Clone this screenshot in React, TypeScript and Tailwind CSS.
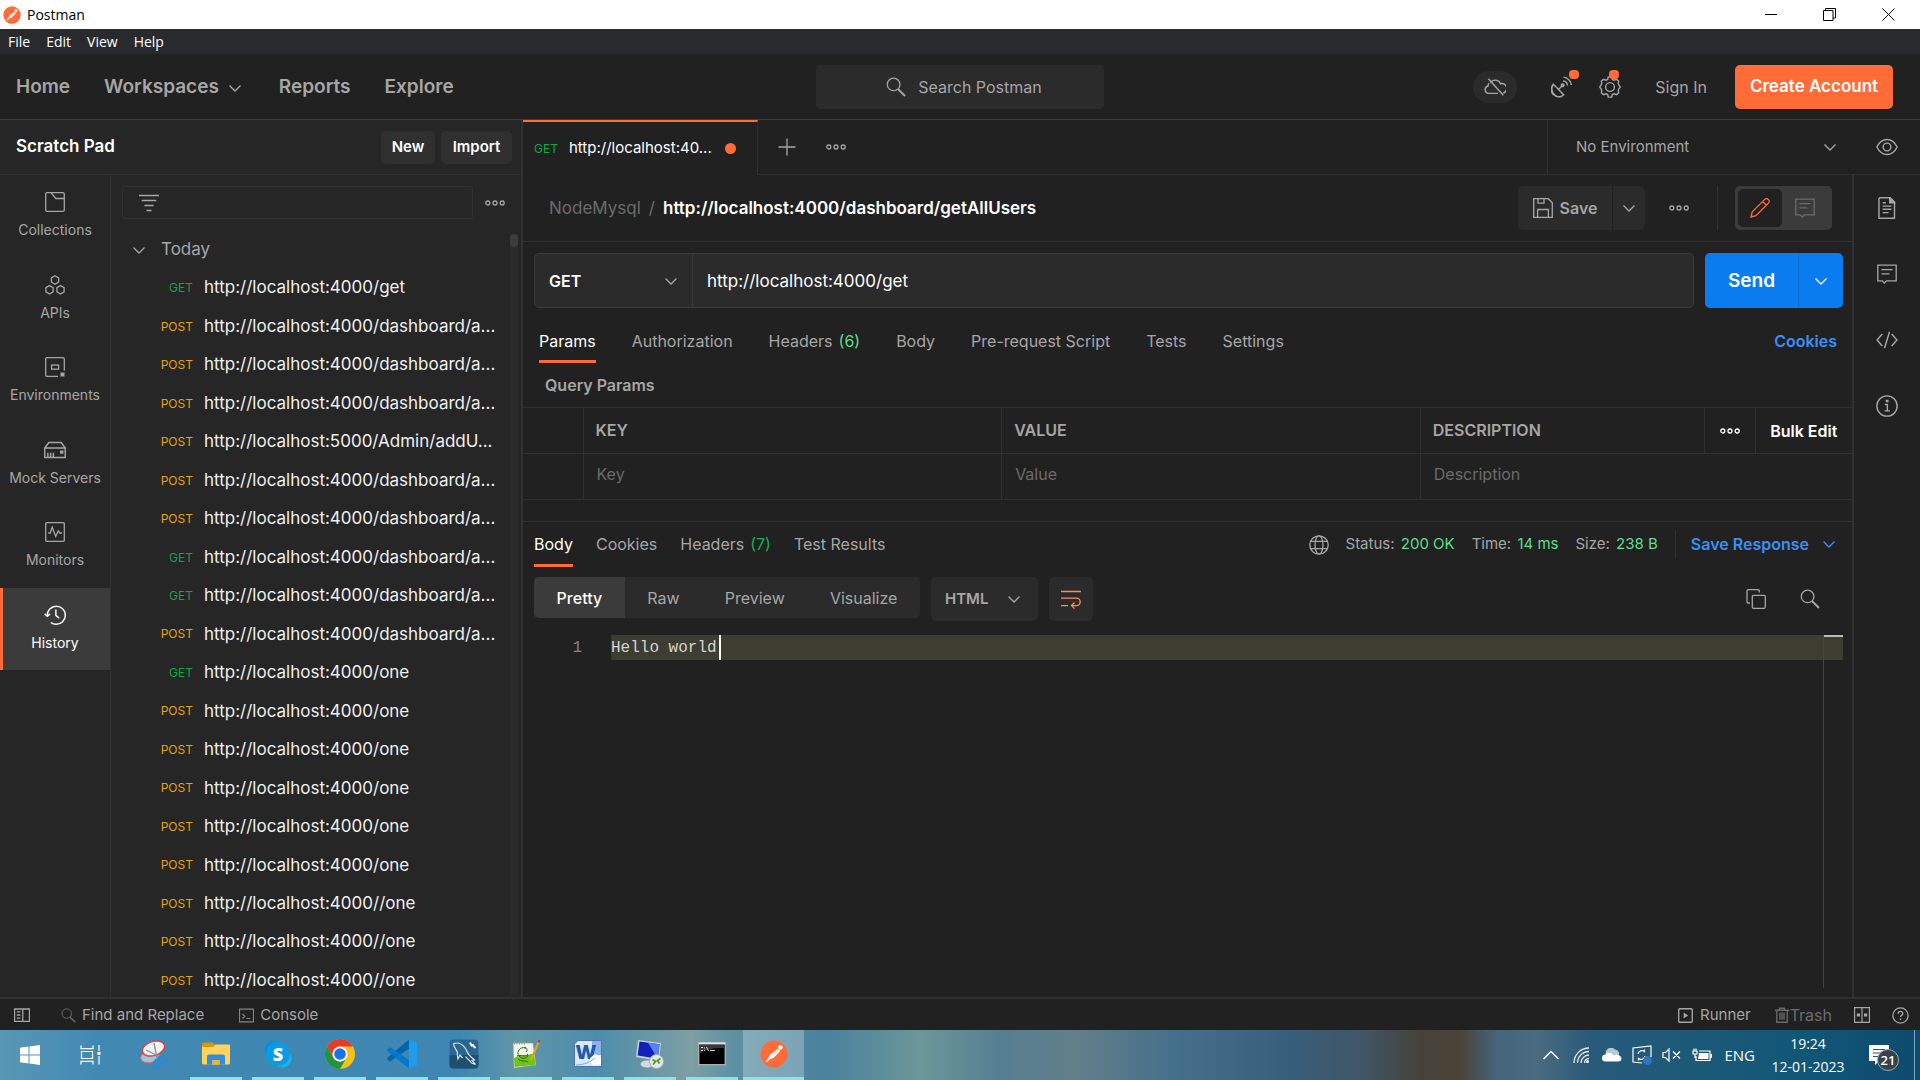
import React, { useState } from 'react';

interface IconProps {
  size?: number;
  className?: string;
  children?: React.ReactNode;
}

/* Every line icon is drawn on a 20 unit grid */
function Icon({ size = 20, className = '', children }: IconProps) {
  return (
    <svg
      width={size}
      height={size}
      viewBox="0 0 20 20"
      fill="none"
      stroke="currentColor"
      strokeWidth={1.3}
      className={`flex-shrink-0 ${className}`}
      aria-hidden="true"
    >
      {children}
    </svg>
  );
}

const Chevron = ({ className = '' }: { className?: string }) => (
  <Icon className={className}>
    <path d="M4.5 7.5l5.5 5.5 5.5-5.5" />
  </Icon>
);

const Dots = ({ className = '' }: { className?: string }) => (
  <Icon className={className}>
    <circle cx="2.8" cy="10" r="2" />
    <circle cx="10" cy="10" r="2" />
    <circle cx="17.2" cy="10" r="2" />
  </Icon>
);

const SearchIcon = ({ size = 20, className = '' }: IconProps) => (
  <Icon size={size} className={className}>
    <circle cx="7.6" cy="7.4" r="6.3" />
    <path d="M12 12l7 7" strokeWidth={1.9} />
  </Icon>
);

const CommentIcon = ({ className = '' }: { className?: string }) => (
  <Icon className={className}>
    <path d="M.8 1.2h18.4v15.6H9.4L7.3 19l-2.1-2.2H.8z" />
    <path d="M4.4 5.7h11.2M4.4 9.9h8" />
  </Icon>
);

const PostmanLogo = ({ size }: { size: number }) => (
  <svg width={size} height={size} viewBox="0 0 28 28" className="flex-shrink-0" aria-hidden="true">
    <circle cx="14" cy="14" r="13.5" fill="#ff6c37" />
    <circle cx="20.3" cy="7.4" r="2.3" fill="#fff" />
    <path d="M17.6 9.3l2.2 1.7-6.2 6.6-3.4.8-3.4 3.6-.6-.6 3.2-4.2 1-2.4z" fill="#fff" stroke="#fff" strokeWidth=".8" />
    <path d="M13 14.2l4.6-3.9M12.8 16.6l5-4.6" stroke="#ff9a75" strokeWidth=".5" />
  </svg>
);

const navItems = [
  {
    label: 'Collections',
    icon: (
      <Icon>
        <rect x=".7" y=".7" width="18.6" height="18.6" rx="1.4" />
        <path d="M6.2.8l4.6 5.7h8.4" />
      </Icon>
    ),
  },
  {
    label: 'APIs',
    icon: (
      <Icon>
        <path d="M10 .8l3.6 2.1v4.2L10 9.2 6.4 7.1V2.9z" />
        <path d="M4.5 10.6l3.6 2.1v4.2L4.5 19 .9 16.9v-4.2z" />
        <path d="M15.5 10.6l3.6 2.1v4.2L15.5 19l-3.6-2.1v-4.2z" />
      </Icon>
    ),
  },
  {
    label: 'Environments',
    icon: (
      <Icon>
        <path d="M13 19.3H2A1.3 1.3 0 01.7 18V2A1.3 1.3 0 012 .7h16A1.3 1.3 0 0119.3 2v11.5" />
        <rect x="6.6" y="8" width="7" height="4.2" />
        <rect x="15.5" y="15.5" width="4" height="4" fill="currentColor" stroke="none" />
      </Icon>
    ),
  },
  {
    label: 'Mock Servers',
    icon: (
      <Icon size={22}>
        <path d="M.7 8.2h18.6v8.6H.7zM.7 8.2l3.7-5h11.2l3.7 5" />
        <path d="M3.5 12.5v4M6 12.5v4M8.5 12.5v4M15.2 11.2H17v1.6h-1.8z" />
      </Icon>
    ),
  },
  {
    label: 'Monitors',
    icon: (
      <Icon>
        <rect x=".7" y=".7" width="18.6" height="18.6" rx="1" />
        <path d="M3.2 11h2l2-5.8 3.5 9.2 2.6-5.6 1.5 2.2H17" />
      </Icon>
    ),
  },
  {
    label: 'History',
    icon: (
      <Icon size={22}>
        <path d="M3 10.5A8.2 8.2 0 1111 18.4c-1.8 0-3.4-.5-4.8-1.6" />
        <path d="M.6 9L3 11.2 5.6 9" />
        <path d="M10.8 5v5.3l3 2.7" />
      </Icon>
    ),
  },
];

const dashboardUrl = 'http://localhost:4000/dashboard/a...';
const oneUrl = 'http://localhost:4000/one';

const historyItems = [
  { method: 'GET', url: 'http://localhost:4000/get' },
  { method: 'POST', url: dashboardUrl },
  { method: 'POST', url: dashboardUrl },
  { method: 'POST', url: dashboardUrl },
  { method: 'POST', url: 'http://localhost:5000/Admin/addU...' },
  { method: 'POST', url: dashboardUrl },
  { method: 'POST', url: dashboardUrl },
  { method: 'GET', url: dashboardUrl },
  { method: 'GET', url: dashboardUrl },
  { method: 'POST', url: dashboardUrl },
  { method: 'GET', url: oneUrl },
  { method: 'POST', url: oneUrl },
  { method: 'POST', url: oneUrl },
  { method: 'POST', url: oneUrl },
  { method: 'POST', url: oneUrl },
  { method: 'POST', url: oneUrl },
  { method: 'POST', url: 'http://localhost:4000//one' },
  { method: 'POST', url: 'http://localhost:4000//one' },
  { method: 'POST', url: 'http://localhost:4000//one' },
];

function TitleBar() {
  return (
    <div className="h-[29px] flex-shrink-0 flex items-center bg-white text-black pl-[3px] pr-0.5 font-['Open_Sans',sans-serif] text-sm">
      <PostmanLogo size={18} />
      <span className="ml-1.5 flex-1">Postman</span>
      <button aria-label="Minimize" className="w-[58px] h-full flex items-center justify-center">
        <svg width="12" height="12" stroke="#000" fill="none"><path d="M0 5.5h12" /></svg>
      </button>
      <button aria-label="Restore" className="w-[58px] h-full flex items-center justify-center">
        <svg width="13" height="13" stroke="#000" fill="none">
          <path d="M.5 2.5H10v10H.5zM2.5 2.5v-2h10V10H10" />
        </svg>
      </button>
      <button aria-label="Close" className="w-[60px] h-full flex items-center justify-center">
        <svg width="13" height="13" stroke="#000" fill="none"><path d="M.5.5l12 12M12.5.5l-12 12" /></svg>
      </button>
    </div>
  );
}

function MenuBar() {
  return (
    <div className="h-[25px] flex-shrink-0 flex items-center gap-4 bg-[#292a2d] pl-2 text-white font-['Open_Sans',sans-serif] text-sm">
      {['File', 'Edit', 'View', 'Help'].map((item) => (
        <button key={item}>{item}</button>
      ))}
    </div>
  );
}

function Header() {
  return (
    <header className="h-[66px] flex-shrink-0 grid grid-cols-[1fr_288px_1fr] items-center border-b border-[#3b3b3b]">
      <nav className="flex items-center gap-[34px] pl-4 pt-0.5 text-[19px] font-semibold text-[#a6a6a6]">
        <a href="#home">Home</a>
        <button className="flex items-center gap-1.5">
          Workspaces
          <Chevron />
        </button>
        <a href="#reports">Reports</a>
        <a href="#explore">Explore</a>
      </nav>
      <button className="h-[44px] pl-2 rounded-[5px] bg-[#2b2b2b] flex items-center justify-center gap-3 text-base text-[#a6a6a6]">
        <SearchIcon />
        Search Postman
      </button>
      <div className="flex items-center justify-end pr-[27px]">
        <button aria-label="Offline" className="w-[44px] h-8 rounded-full bg-[#2b2b2b] text-[#a6a6a6] flex items-center justify-center">
          <Icon size={22}>
            <path d="M6 6.2A5 5 0 0115 7a4 4 0 012.5 8.5M12.6 15.8H4.2a3.4 3.4 0 01-.5-6.7c0-1 .3-1.9.8-2.7" />
            <path d="M4 2.5l13.5 15" />
          </Icon>
        </button>
        <button aria-label="Capture requests" className="relative ml-[34px] text-[#a6a6a6]">
          <Icon size={22}>
            <path d="M2.2 7.5A6.6 6.6 0 0011.5 17zM2.2 7.5c-2 3-1.5 7 1 9.6s5.500 2.500 8.300-.1M6.800 12.200L10 9" />
            <circle cx="10.6" cy="8.4" r="1.2" fill="currentColor" />
            <path d="M11 4.6a4.3 4.3 0 014 4M11.4 1a7.8 7.8 0 017 7.2" />
          </Icon>
          <span className="absolute -top-1.5 -right-1.5 w-2.5 h-[9px] rounded bg-[#ff6c37]" />
        </button>
        <button aria-label="Settings" className="relative ml-[26px] text-[#a6a6a6]">
          <Icon size={22}>
            <path d="M8.400.8h3.200l.5 2.300 1.600.8 2.200-.8 1.900 1.500-.3 2 .6 1.800 1.300 1.600-1.300 1.600-.6 1.800.3 2-1.900 1.500-2.200-.8-1.600.8-.5 2.300H8.400l-.5-2.300-1.600-.8-2.200.8-1.900-1.500.3-2-.6-1.800L.6 10l1.300-1.600.6-1.800-.3-2 1.900-1.500 2.200.8 1.600-.8z" />
            <circle cx="10" cy="10" r="4" />
          </Icon>
          <span className="absolute -top-1.5 right-0.5 w-2.5 h-[9px] rounded bg-[#ff6c37]" />
        </button>
        <a href="#signin" className="ml-[34px] text-base text-[#a6a6a6]">Sign In</a>
        <button className="ml-7 w-[158px] h-[44px] pt-px rounded-[5px] bg-[#ff6c37] text-white text-[17px] font-semibold">
          Create Account
        </button>
      </div>
    </header>
  );
}

function Sidebar() {
  const [active, setActive] = useState('History');

  return (
    <aside className="w-[523px] flex-shrink-0 flex flex-col bg-[#262626] border-r-2 border-[#303030]">
      <div className="h-[55px] flex-shrink-0 flex items-center gap-1.5 border-b border-[#303030] pl-4 pr-[9px]">
        <h1 className="flex-1 text-[17px] font-semibold text-white">Scratch Pad</h1>
        <button className="w-[54px] h-[33px] rounded-[5px] bg-[#303030] text-[15px] font-semibold text-white">New</button>
        <button className="w-[71px] h-[33px] rounded-[5px] bg-[#303030] text-[15px] font-semibold text-white">Import</button>
      </div>

      <div className="flex-1 min-h-0 flex">
        <nav className="w-[111px] flex-shrink-0 border-r border-[#303030]">
          <div className="h-[495px] flex flex-col">
            {navItems.map(({ label, icon }) => (
              <button
                key={label}
                onClick={() => setActive(label)}
                className={`flex-1 flex flex-col items-center gap-[7px] pt-4 text-sm ${
                  active === label
                    ? 'bg-[#3b3b3b] text-white shadow-[inset_3px_0_#ff6c37]'
                    : 'text-[#a6a6a6]'
                }`}
              >
                <span className="h-[22px] flex items-center">{icon}</span>
                {label}
              </button>
            ))}
          </div>
        </nav>

        <div className="flex-1 min-w-0 flex flex-col">
          <div className="h-[55px] flex-shrink-0 flex items-center gap-3 pl-[11px] pr-4 text-[#a6a6a6]">
            <label className="flex-1 h-[33px] flex items-center gap-3 border border-[#303030] rounded-[3px] pl-4">
              <Icon>
                <path d="M0 2.5h20M2.7 7.5h14.6M5.4 12.5h9.2M7.5 17.5h5" />
              </Icon>
              <input aria-label="Filter history" className="flex-1 min-w-0 bg-transparent outline-none" />
            </label>
            <button aria-label="History options">
              <Dots />
            </button>
          </div>

          <div className="relative flex-1 min-h-0 overflow-hidden">
            <button className="h-[38px] flex items-center gap-3 pl-[18px] pt-px text-[17px] text-[#a6a6a6]">
              <Chevron />
              Today
            </button>
            <ul className="h-[731px] flex flex-col">
              {historyItems.map(({ method, url }, i) => (
                <li key={i} className="flex-1 flex items-center pt-0.5">
                  <span
                    className={`w-[82px] text-right text-xs ${
                      method === 'GET' ? 'text-[#10a54a]' : 'text-[#e5a50a]'
                    }`}
                  >
                    {method}
                  </span>
                  <a href="#request" className="ml-[11px] text-[17px] text-[#f0f0f0] whitespace-nowrap">{url}</a>
                </li>
              ))}
            </ul>
            <div className="absolute top-1 right-[3px] bottom-0.5 w-2 rounded-full bg-[#2b2b2b]">
              <div className="h-[13px] rounded-full bg-[#3d3d3d]" />
            </div>
          </div>
        </div>
      </div>
    </aside>
  );
}

function TabStrip() {
  return (
    <div className="h-[55px] flex-shrink-0 flex text-[#a6a6a6]">
      <button className="w-[235px] flex items-center gap-[11px] border-t-2 border-t-[#ff6c37] border-r border-r-[#303030] pl-[11px] text-[15px] text-white">
        <span className="text-xs text-[#10a54a]">GET</span>
        <span>http://localhost:40...</span>
        <span className="w-[11px] h-[11px] ml-0.5 rounded-full bg-[#ff6c37]" />
      </button>
      <div className="flex-1 flex items-center gap-[29px] border-b border-[#303030] pl-[19px]">
        <button aria-label="New tab">
          <Icon>
            <path d="M10 1.5v17M1.5 10h17" />
          </Icon>
        </button>
        <button aria-label="Tab options">
          <Dots />
        </button>
      </div>
      <label className="w-[307px] flex items-center border-l border-b border-[#303030] pl-7 pr-3.5 text-[15px]">
        <select aria-label="Environment" className="flex-1 appearance-none bg-transparent outline-none">
          <option>No Environment</option>
        </select>
        <Chevron />
      </label>
      <button aria-label="Environment quick look" className="w-[66px] flex items-center justify-center border-b border-[#303030]">
        <Icon size={22}>
          <path d="M.8 10C3 5.6 6.2 3.2 10 3.2s7 2.400 9.200 6.800c-2.200 4.400-5.400 6.800-9.200 6.800S3 14.400.8 10z" />
          <circle cx="10" cy="10" r="3.5" />
        </Icon>
      </button>
    </div>
  );
}

function RequestTitle() {
  return (
    <div className="h-[67px] flex-shrink-0 flex items-center border-b border-[#303030] pl-[26px] pr-5 text-[17px] text-[#a6a6a6]">
      <div className="flex-1 flex pt-0.5 text-[#6b6b6b]">
        <span>NodeMysql</span>
        <span className="mx-2">/</span>
        <h2 className="font-semibold text-white">http://localhost:4000/dashboard/getAllUsers</h2>
      </div>
      <button className="w-[94px] h-[44px] rounded-l-[5px] bg-[#2b2b2b] flex items-center justify-center gap-[7px] text-base font-semibold">
        <Icon>
          <path d="M.7.7h14.6l4 4v14.600H.7z" />
          <path d="M5 .8v4.4h6V.8M4.6 19v-7.500h10.800V19" />
        </Icon>
        Save
      </button>
      <button aria-label="Save options" className="ml-px w-8 h-[44px] rounded-r-[5px] bg-[#2b2b2b] flex items-center justify-center">
        <Chevron />
      </button>
      <button aria-label="More actions" className="ml-6">
        <Dots />
      </button>
      <div className="ml-7 h-[44px] w-px bg-[#303030]" />
      <div className="ml-[17px] w-[97px] h-[44px] rounded-[5px] bg-[#3b3b3b] flex p-[3px]">
        <button aria-label="Edit" className="w-[44px] rounded-[5px] bg-[#212121] text-[#ff6c37] flex items-center justify-center">
          <Icon>
            <path d="M1 19l1.200-5.200L14.600 1.600a2.300 2.300 0 013.700 0 2.300 2.300 0 010 3.600L6 17.600zM12.600 3.600l3.700 3.700" />
          </Icon>
        </button>
        <button aria-label="Comments" className="flex-1 pr-0.5 text-[#6b6b6b] flex items-center justify-center">
          <CommentIcon />
        </button>
      </div>
    </div>
  );
}

function UrlBar() {
  const [url, setUrl] = useState('http://localhost:4000/get');

  return (
    <div className="flex-shrink-0 flex gap-[11px] pt-[11px] pl-[11px] pr-[9px]">
      <div className="flex-1 h-[55px] flex rounded-[5px] border border-[#3b3b3b] bg-[#2b2b2b]">
        <label className="w-[158px] flex items-center border-r border-[#3b3b3b] pl-3.5 pr-[11px] text-[#a6a6a6]">
          <select aria-label="Method" className="flex-1 appearance-none bg-transparent outline-none text-base font-semibold text-white">
            <option>GET</option>
            <option>POST</option>
          </select>
          <Chevron />
        </label>
        <input
          aria-label="Request URL"
          value={url}
          onChange={(e) => setUrl(e.target.value)}
          className="flex-1 min-w-0 px-3.5 pt-0.5 bg-transparent outline-none text-[17px] text-white"
        />
      </div>
      <div className="flex rounded-[5px] bg-[#0a7cf0] text-white">
        <button className="w-[93px] pt-0.5 text-[19px] font-semibold">Send</button>
        <button aria-label="Send options" className="w-[45px] border-l border-[#0a6fd6] flex items-center justify-center">
          <Chevron />
        </button>
      </div>
    </div>
  );
}

const requestTabs = ['Params', 'Authorization', 'Headers', 'Body', 'Pre-request Script', 'Tests', 'Settings'];

function RequestTabs() {
  const [active, setActive] = useState('Params');

  return (
    <div className="h-[55px] flex-shrink-0 flex items-end gap-9 pl-4 pr-[15px] text-base">
      {requestTabs.map((tab) => (
        <button
          key={tab}
          onClick={() => setActive(tab)}
          className={`h-[44px] pt-0.5 border-b-3 ${
            active === tab ? 'border-[#ff6c37] text-white' : 'border-transparent text-[#a6a6a6]'
          }`}
        >
          {tab}
          {tab === 'Headers' && <span className="ml-1.5 text-[#5fdc8f]">(6)</span>}
        </button>
      ))}
      <a href="#cookies" className="h-[44px] pt-2.5 ml-auto font-semibold text-[#3b8ff5]">Cookies</a>
    </div>
  );
}

function ParamsTable() {
  return (
    <div className="flex-shrink-0">
      <h3 className="h-[44px] flex items-center pl-[22px] text-base font-semibold text-[#a6a6a6]">Query Params</h3>
      <table className="w-full table-fixed border-collapse text-base text-left">
        <colgroup>
          <col className="w-[60px]" />
          <col className="w-[31.5%]" />
          <col className="w-[31.5%]" />
          <col />
          <col className="w-[51px]" />
          <col className="w-[97px]" />
        </colgroup>
        <thead>
          <tr className="h-[46px] border-y border-[#303030] text-[#a6a6a6]">
            <th className="border-r border-[#303030]" aria-label="Enabled" />
            <th className="border-r border-[#303030] pl-3 pb-0.5 font-semibold">KEY</th>
            <th className="border-r border-[#303030] pl-3 pb-0.5 font-semibold">VALUE</th>
            <th className="border-r border-[#303030] pl-3 pb-0.5 font-semibold">DESCRIPTION</th>
            <th className="border-r border-[#303030]">
              <button aria-label="Column options" className="w-full flex justify-center text-white">
                <Dots />
              </button>
            </th>
            <th className="text-center">
              <button className="font-semibold text-white whitespace-nowrap">Bulk Edit</button>
            </th>
          </tr>
        </thead>
        <tbody>
          <tr className="h-[46px] border-b border-[#303030]">
            <td className="border-r border-[#303030]" />
            <td className="border-r border-[#303030] pl-[13px] pb-1.5">
              <input aria-label="Key" placeholder="Key" className="w-full bg-transparent outline-none placeholder:text-[#6b6b6b]" />
            </td>
            <td className="border-r border-[#303030] pl-[13px] pb-1.5">
              <input aria-label="Value" placeholder="Value" className="w-full bg-transparent outline-none placeholder:text-[#6b6b6b]" />
            </td>
            <td colSpan={3} className="pl-[13px] pb-1.5">
              <input aria-label="Description" placeholder="Description" className="w-full bg-transparent outline-none placeholder:text-[#6b6b6b]" />
            </td>
          </tr>
        </tbody>
      </table>
    </div>
  );
}

function Stat({ label, value }: { label: string; value: string }) {
  return (
    <span className="text-[15px]">
      {label}: <span className="ml-0.5 text-[#5fdc8f]">{value}</span>
    </span>
  );
}

function ResponsePanel() {
  const [tab, setTab] = useState('Body');
  const [view, setView] = useState('Pretty');

  return (
    <section className="mt-[21px] flex-1 min-h-0 flex flex-col border-t border-[#303030] text-[#a6a6a6]">
      <div className="h-[45px] flex-shrink-0 flex items-center pl-[11px] pr-[13px] text-base">
        <div className="flex-1 self-stretch flex gap-[23px]">
          {['Body', 'Cookies', 'Headers', 'Test Results'].map((name) => (
            <button
              key={name}
              onClick={() => setTab(name)}
              className={`pt-0.5 border-b-3 ${tab === name ? 'border-[#ff6c37] text-white' : 'border-transparent'}`}
            >
              {name}
              {name === 'Headers' && <span className="ml-1.5 text-[#10b04f]">(7)</span>}
            </button>
          ))}
        </div>
        <div className="flex items-center gap-[17px]">
          <Icon>
            <circle cx="10" cy="10" r="9.2" />
            <ellipse cx="10" cy="10" rx="4" ry="9.2" />
            <path d="M1.8 6.3h16.4M1.8 13.7h16.4" />
          </Icon>
          <Stat label="Status" value="200 OK" />
          <Stat label="Time" value="14 ms" />
          <Stat label="Size" value="238 B" />
          <div className="w-px h-7 bg-[#303030]" />
          <button className="-ml-0.5 pb-0.5 flex items-center gap-2.5 font-semibold text-[#3b8ff5]">
            Save Response
            <Chevron />
          </button>
        </div>
      </div>

      <div className="flex-shrink-0 flex items-start pt-2.5 pl-[11px] pr-8 text-base">
        <div className="w-[386px] h-[41px] flex rounded-[5px] bg-[#2b2b2b] overflow-hidden">
          {['Pretty', 'Raw', 'Preview', 'Visualize'].map((name) => (
            <button
              key={name}
              onClick={() => setView(name)}
              className={`flex-auto px-[22px] ${view === name ? 'bg-[#3b3b3b] text-white font-medium' : ''}`}
            >
              {name}
            </button>
          ))}
        </div>
        <label className="ml-[11px] w-[107px] h-[44px] flex items-center rounded-[5px] bg-[#2b2b2b] px-3.5">
          <select aria-label="Language" className="flex-1 min-w-0 appearance-none bg-transparent outline-none text-[15px] font-semibold">
            <option>HTML</option>
          </select>
          <Chevron />
        </label>
        <button aria-label="Wrap lines" className="ml-[11px] w-[44px] h-[44px] rounded-[5px] bg-[#2b2b2b] text-[#ff8a5e] flex items-center justify-center">
          <Icon>
            <path d="M0 2.5h20M0 9.2h15.500a3.700 3.700 0 010 7.400H11M0 16.600h7M13.500 13.500L10.500 16.600l3 3" />
          </Icon>
        </button>
        <div className="ml-auto h-[44px] flex items-center gap-[34px]">
          <button aria-label="Copy">
            <Icon>
              <path d="M4 14H2.300A1.300 1.300 0 011 12.700V2A1.300 1.300 0 012.300.700H12A1.300 1.300 0 0113.300 2v1.500" />
              <rect x="6.3" y="6.3" width="13" height="13" rx="1.3" />
            </Icon>
          </button>
          <button aria-label="Search response">
            <SearchIcon />
          </button>
        </div>
      </div>

      <div className="flex-1 flex pt-3.5 pb-[9px] pr-[9px] font-['Liberation_Mono',monospace] text-base leading-[25px]">
        <span className="w-[59px] pt-px text-right text-[#858585]">1</span>
        <div className="relative ml-[29px] flex-1">
          <div className="h-[25px] flex bg-[#3e3d32] text-[#d4d4d4]">
            <span className="pt-px">Hello world</span>
            <span className="w-0.5 h-full ml-0.5 bg-white" />
          </div>
          <div className="absolute top-0 right-0 bottom-0 w-5 border-l border-[#454545]">
            <div className="h-0.5 bg-[#bdbdb5]" />
          </div>
        </div>
      </div>
    </section>
  );
}

function RightRail() {
  return (
    <div className="w-[68px] flex-shrink-0 flex flex-col items-center gap-11 border-l-2 border-[#303030] pt-[22px] text-[#a6a6a6]">
      <button aria-label="Documentation">
        <Icon size={22}>
          <path d="M3.5.7h9.300l4 4v14.600H2.700V1.500z" />
          <path d="M12.5.7v4.500h4.300z" fill="currentColor" />
          <path d="M6 5.3h3M6 8.3h8M6 11.2h8M6 14.2h5.5" />
        </Icon>
      </button>
      <button aria-label="Comments" className="py-px">
        <CommentIcon />
      </button>
      <button aria-label="Code">
        <Icon size={22}>
          <path d="M5.7 4.5L1 10l4.700 5.500M14.300 4.500L19 10l-4.700 5.500M12.300 2.500l-4.600 15" />
        </Icon>
      </button>
      <button aria-label="Info">
        <Icon size={22}>
          <circle cx="10" cy="10" r="9.2" />
          <path d="M8 8.7h2.300v5.500M7.700 14.400h5M9.500 5h1.300v1H9.500z" />
        </Icon>
      </button>
    </div>
  );
}

function StatusBar() {
  return (
    <footer className="h-[33px] flex-shrink-0 flex items-center border-t-2 border-[#303030] pt-px pl-3.5 pr-[11px] text-[15px] text-[#a6a6a6]">
      <button aria-label="Toggle sidebar">
        <Icon size={16}>
          <path d="M.7 2.5h18.600v15.400H.7zM11 2.500v15.400M3.500 6.200H8M3.500 10H8M3.500 13.800H8" strokeWidth={1.6} />
        </Icon>
      </button>
      <button className="ml-[31px] flex items-center gap-1.5">
        <SearchIcon size={15} className="text-[#6b6b6b]" />
        Find and Replace
      </button>
      <button className="ml-[35px] flex items-center gap-1.5">
        <Icon size={15} className="text-[#858585]">
          <path d="M.7 1.5h18.600v17H.7zM4.500 8L8 11l-3.500 3M10 14h5" strokeWidth={1.5} />
        </Icon>
        Console
      </button>
      <button className="ml-auto flex items-center gap-[7px]">
        <Icon size={15}>
          <rect x="1" y="1" width="18" height="18" rx="1.5" strokeWidth={1.8} />
          <path d="M7.5 6v8l6-4z" fill="currentColor" stroke="none" />
        </Icon>
        Runner
      </button>
      <button className="ml-[23px] flex items-center text-base text-[#6b6b6b]">
        <Icon size={16}>
          <path d="M1 4h18M7 4V1.5h6V4M3.5 4v15h13V4M7.5 7v9M10 7v9M12.5 7v9" strokeWidth={1.7} />
        </Icon>
        Trash
      </button>
      <button aria-label="Two pane view" className="ml-[22px]">
        <Icon size={16}>
          <path d="M.7.7h18.600v18.600H.7zM10 .7v18.600" strokeWidth={1.5} />
          <path d="M3.5 8h4v4h-4zM12.5 8h4v4h-4z" fill="currentColor" stroke="none" />
        </Icon>
      </button>
      <button aria-label="Help" className="ml-[22px]">
        <Icon size={17}>
          <circle cx="10" cy="10" r="9" strokeWidth={1.5} />
          <path d="M7.2 7.8c0-3.400 5.600-3.400 5.600-.2 0 2-2.800 2-2.800 4.200M10 13.500v1.800" strokeWidth={1.6} />
        </Icon>
      </button>
    </footer>
  );
}

const SnippingIcon = () => (
  <svg width="30" height="30" viewBox="0 0 30 30" fill="none">
    <ellipse cx="11" cy="16.5" rx="9.5" ry="6" transform="rotate(-15 11 16.5)" fill="#9fc4dc" stroke="#d96b73" />
    <ellipse cx="14.5" cy="8.5" rx="11.5" ry="7" transform="rotate(-18 14.5 8.5)" fill="#f3f3f3" stroke="#d8434c" strokeWidth="1.5" />
    <path d="M7 10l12 6M15 3l3 15" stroke="#8b8f94" strokeWidth="1.3" />
    <ellipse cx="17.5" cy="24" rx="2.5" ry="4.5" transform="rotate(15 17.5 24)" stroke="#2a8bd0" strokeWidth="2" />
    <ellipse cx="23.5" cy="20" rx="4.5" ry="2.5" transform="rotate(35 23.5 20)" stroke="#2a8bd0" strokeWidth="2" />
  </svg>
);

const ExplorerIcon = () => (
  <svg width="28" height="24" viewBox="0 0 28 24">
    <path d="M0 2A1.5 1.5 0 011.500.5h9L13 3v3H0z" fill="#d99a06" />
    <path d="M0 5h11l2.500-2.500H27a1 1 0 011 1V21a1.500 1.500 0 01-1.500 1.500h-25A1.500 1.500 0 010 21z" fill="#ffd35c" />
    <path d="M5 22.500v-8a2 2 0 012-2h14a2 2 0 012 2v8h-5.500V18h-7v4.500z" fill="#2f8de4" />
    <path d="M10.500 18h7v4.500h-7z" fill="#f0b429" />
  </svg>
);

const SkypeIcon = () => (
  <svg width="28" height="28" viewBox="0 0 28 28">
    <circle cx="9.5" cy="9.5" r="9" fill="#0b8fdc" />
    <circle cx="18.5" cy="18.5" r="9" fill="#1fb3ee" />
    <circle cx="14" cy="14" r="12" fill="#0a9be5" />
    <text x="14" y="20.5" textAnchor="middle" fill="#fff" fontSize="18" fontWeight="800" fontFamily="'Open Sans', sans-serif">S</text>
  </svg>
);

const ChromeIcon = () => (
  <svg width="30" height="30" viewBox="0 0 30 30">
    <circle cx="15" cy="15" r="15" fill="#fbc116" />
    <path d="M2 7.5A15 15 0 0128 7.5H15a7.500 7.500 0 00-6.500 11.200z" fill="#e33b2e" />
    <path d="M2 7.5a15 15 0 0013 22.500l6.500-11.200a7.500 7.500 0 01-13 0z" fill="#229342" />
    <circle cx="15" cy="15" r="7.5" fill="#fff" />
    <circle cx="15" cy="15" r="5.8" fill="#1a73e8" />
  </svg>
);

const VsCodeIcon = () => (
  <svg width="30" height="30" viewBox="0 0 30 30">
    <path d="M22 .5v9L3 22.500.3 20.800v-2z" fill="#0065a9" />
    <path d="M.3 10.500L3 8l19 13v8.500L.3 12z" fill="#007acc" />
    <path d="M22 .5l8 3.200v22.600l-8 3.200z" fill="#1f9cf0" />
  </svg>
);

const WorkbenchIcon = () => (
  <svg width="30" height="30" viewBox="0 0 30 30" fill="none">
    <rect x=".5" y=".5" width="29" height="29" rx="4" fill="#2c6690" />
    <path d="M.5 16h29v9.500a4 4 0 01-4 4h-21a4 4 0 01-4-4z" fill="#1f4f6e" />
    <path
      d="M4.500 4.500c5-1.500 9 .5 12 5 2 3 2 6 5 8l4 3.500-2.500.5 3.500 4-4-1.500c-3-4-4-4-6-6.500M4.500 4.500c0 4 3 6 4 9-.5 2 0 4 .5 6.500l2-4 2.500 3"
      stroke="#d9e6ee"
      strokeWidth="1.2"
    />
    <path d="M21 3.500l1.500 3 2.500-.5M23 5.500l3.500 3.500" stroke="#fff" strokeWidth="1.8" />
  </svg>
);

const NotepadIcon = () => (
  <svg width="30" height="30" viewBox="0 0 30 30" fill="none">
    <path d="M2 4h20l3 22-22 3z" fill="#f4f6ee" stroke="#8a9a80" strokeWidth=".6" />
    <path d="M3 19c7-4 14-2 20-5l1.500 12L3.500 28z" fill="#72c21c" />
    <path d="M3.500 2.500v3M6 2.500v3M8.500 2.500v3M11 2.500v3M13.500 2.500v3" stroke="#999" />
    <path d="M15 9c-6-2-10 4-7 8 3 4 9 2 9-1M6 17c4-2 8 2 11-2M13 9c3-1 4 2 2 4M7 20c3 3 7 1 10 3" stroke="#2a6a20" />
    <path d="M28 2L20 21" stroke="#e9a21b" strokeWidth="2" />
    <path d="M28.500 1l-1 2.500" stroke="#b0413e" strokeWidth="2" />
  </svg>
);

const WordIcon = () => (
  <svg width="30" height="30" viewBox="0 0 30 30">
    <path d="M5 1.500h23.500v26H1.500V5z" fill="#dce8f8" stroke="#4a74b8" />
    <path d="M19 2h9v14h-9z" fill="#8fb2e4" />
    <text x="13" y="20" textAnchor="middle" fill="#1b5cae" fontSize="20" fontWeight="800" fontFamily="'Open Sans', sans-serif">W</text>
    <path d="M17 19l5-4 6 3v7l-8 2z" fill="#fff" />
    <path d="M3 26c8 0 14-3 19-7" stroke="#7fa5dc" fill="none" />
  </svg>
);

const RemoteIcon = () => (
  <svg width="30" height="30" viewBox="0 0 30 30">
    <ellipse cx="12" cy="25" rx="6.5" ry="3.5" fill="#d5d9dc" />
    <path d="M3 1l23 3-2 18L1 18z" fill="#c9d1d8" />
    <path d="M4.500 2.500l20 2.700-1.700 14.600L2.700 16.500z" fill="#1220b8" />
    <path d="M13 3.700l11.500 1.500-1.700 14.600z" fill="#5b7ef0" />
    <circle cx="21.5" cy="22.5" r="7" fill="#e6e8e8" stroke="#a4a8a8" />
    <path d="M17.500 20.500l3 2-2.500 3M25.500 19.500l-3 2 2 3" stroke="#3aa528" strokeWidth="1.8" fill="none" />
  </svg>
);

const TerminalIcon = () => (
  <svg width="28" height="24" viewBox="0 0 28 24">
    <rect x=".7" y=".7" width="26.6" height="22" fill="#000" stroke="#a7acb0" strokeWidth="1.4" />
    <path d="M1 1.500h26" stroke="#dfe3e5" strokeWidth="2" />
    <path d="M1.500 3h25v3C16 6 7 7 1.500 12z" fill="#3a3a3a" />
    <path d="M3 5.500h2M3 8.500h2M6.500 5.500v1M6.500 8v1M8.500 5l2 4M12 8.500h5" stroke="#ddd" />
  </svg>
);

const taskbarApps = [
  { name: 'File Explorer', icon: <ExplorerIcon /> },
  { name: 'Skype', icon: <SkypeIcon /> },
  { name: 'Chrome', icon: <ChromeIcon /> },
  { name: 'Visual Studio Code', icon: <VsCodeIcon /> },
  { name: 'MySQL Workbench', icon: <WorkbenchIcon /> },
  { name: 'Notepad++', icon: <NotepadIcon /> },
  { name: 'Word', icon: <WordIcon /> },
  { name: 'Remote Desktop', icon: <RemoteIcon /> },
  { name: 'Command Prompt', icon: <TerminalIcon /> },
];

function Taskbar() {
  return (
    <div className="h-[50px] flex-shrink-0 flex text-white font-['Open_Sans',sans-serif] bg-[linear-gradient(90deg,#5a97b5_0%,#4189b3_5%,#3f87b2_24%,#6296a8_27%,#4c8cab_31%,#7d9fa3_36%,#5f92a3_38%,#4a819d_43%,#6b9799_48%,#567f92_52%,#637f8a_56%,#45708c_61%,#375f7c_67%,#415566_71%,#46423a_74%,#4b4337_76%,#45657c_78%,#4a6b80_80%,#28597a_83%,#1d5a78_88%,#115677_94%,#0d4b6e_100%)]">
      <button aria-label="Start" className="w-[60px] flex items-center justify-center">
        <svg width="20" height="20" viewBox="0 0 20 20" fill="#fff">
          <path d="M0 2.800l8.500-1.200v7.900H0zM9.500 1.400L20 0v9.500H9.500zM0 10.500h8.500v7.900L0 17.200zM9.500 10.500H20V20L9.500 18.600z" />
        </svg>
      </button>
      <button aria-label="Task view" className="w-[62px] flex items-center justify-center">
        <svg width="22" height="20" viewBox="0 0 22 20" fill="none" stroke="#fff" strokeWidth="1.2">
          <path d="M1 .5v3.200h12V.5M1 19.500v-3.200h12v3.200M1.500 6.500h11v7h-11zM19 0v6M19 11v8.500" />
          <path d="M17.500 7h3v3h-3z" fill="#fff" stroke="none" />
        </svg>
      </button>
      <button aria-label="Snipping Tool" className="w-[63px] flex items-center justify-center">
        <SnippingIcon />
      </button>
      {taskbarApps.map(({ name, icon }) => (
        <button key={name} aria-label={name} className="w-[62px] px-[5px] flex flex-col items-center">
          <span className="h-[47px] flex items-center">{icon}</span>
          <span className="w-full h-[3px] bg-[#8ae3e9]" />
        </button>
      ))}
      <button aria-label="Postman" className="w-[61px] flex flex-col items-center bg-white/25">
        <span className="h-[47px] flex items-center"><PostmanLogo size={28} /></span>
        <span className="w-full h-[3px] bg-[#8ae3e9]" />
      </button>

      <div className="ml-auto flex items-center">
        <button aria-label="Show hidden icons">
          <svg width="16" height="10" stroke="#fff" strokeWidth="1.4" fill="none"><path d="M.5 9L8 1.500 15.500 9" /></svg>
        </button>
        <svg width="17" height="17" className="ml-3.5" fill="none" stroke="#e8eef2" strokeWidth="1.3">
          <path d="M1 16A15 15 0 0116 1M4.500 16A11.500 11.500 0 0116 4.500M8 16a8 8 0 018-8M11.500 16a4.500 4.500 0 014.500-4.500" />
          <circle cx="14.5" cy="14.5" r="1.5" fill="#fff" stroke="none" />
        </svg>
        <svg width="20" height="14" className="ml-3" viewBox="0 0 20 14">
          <path d="M5 9a5 5 0 018-7.500A5 5 0 0117 7z" fill="#b9c9d3" />
          <path d="M3.500 13.500a3.500 3.500 0 010-7c3-3 6-1.500 8 1 3-2 8 0 8 3 0 2-1.500 3-3 3z" fill="#fff" />
        </svg>
        <svg width="20" height="20" className="ml-2.5" fill="none" stroke="#fff" strokeWidth="1.2">
          <path d="M10 18l-9-1V3l18-2v11" />
          <path d="M6 9a4 4 0 016.500-2.500V4.500M13 11a4 4 0 01-6.500 2.500v2" />
          <circle cx="15.5" cy="15.5" r="4.5" fill="#2f74c0" stroke="none" />
        </svg>
        <svg width="19" height="14" className="ml-2.5" fill="none" stroke="#fff" strokeWidth="1.2">
          <path d="M1 4.500h2.500L7 1v12L3.500 9.500H1zM11 3.500l7 7M18 3.500l-7 7" />
        </svg>
        <svg width="20" height="14" className="ml-[11px]" fill="none" stroke="#fff" strokeWidth="1.2">
          <path d="M4 8v4.500h14V3H7M19.300 6v4M1 3h4v3H1zM2 .5V3M4 .5V3M3 6v4" />
          <path d="M7 5h9.500v6H6z" fill="#fff" stroke="none" />
        </svg>
        <span className="ml-3 text-[15px]">ENG</span>
        <div className="ml-3.5 w-[78px] text-center text-sm leading-[23px]">
          <div>19:24</div>
          <div>12-01-2023</div>
        </div>
        <button aria-label="Notifications" className="relative ml-[22px] w-8 h-8">
          <svg width="22" height="22" viewBox="0 0 22 22">
            <path d="M0 1h20v16H10l-4 4v-4H0z" fill="#fff" />
            <path d="M4 5.500h12M4 9h12M4 12.500h8" stroke="#1d5876" strokeWidth="1.2" />
          </svg>
          <span className="absolute left-2 top-2.5 w-[22px] h-[22px] rounded-full border border-[#9aa7ae] bg-[#35424b] text-[13px] leading-5 font-semibold text-center">21</span>
        </button>
        <div className="ml-[13px] w-1.5 h-[50px] border-l border-[#7fa5b8]" />
      </div>
    </div>
  );
}

export default function App() {
  return (
    <div className="h-screen flex flex-col overflow-hidden bg-[#212121] font-['Inter',sans-serif]">
      <TitleBar />
      <MenuBar />
      <Header />
      <div className="flex-1 min-h-0 flex">
        <Sidebar />
        <main className="flex-1 min-w-0 flex flex-col">
          <TabStrip />
          <div className="flex-1 min-h-0 flex">
            <div className="flex-1 min-w-0 flex flex-col">
              <RequestTitle />
              <UrlBar />
              <RequestTabs />
              <ParamsTable />
              <ResponsePanel />
            </div>
            <RightRail />
          </div>
        </main>
      </div>
      <StatusBar />
      <Taskbar />
    </div>
  );
}
